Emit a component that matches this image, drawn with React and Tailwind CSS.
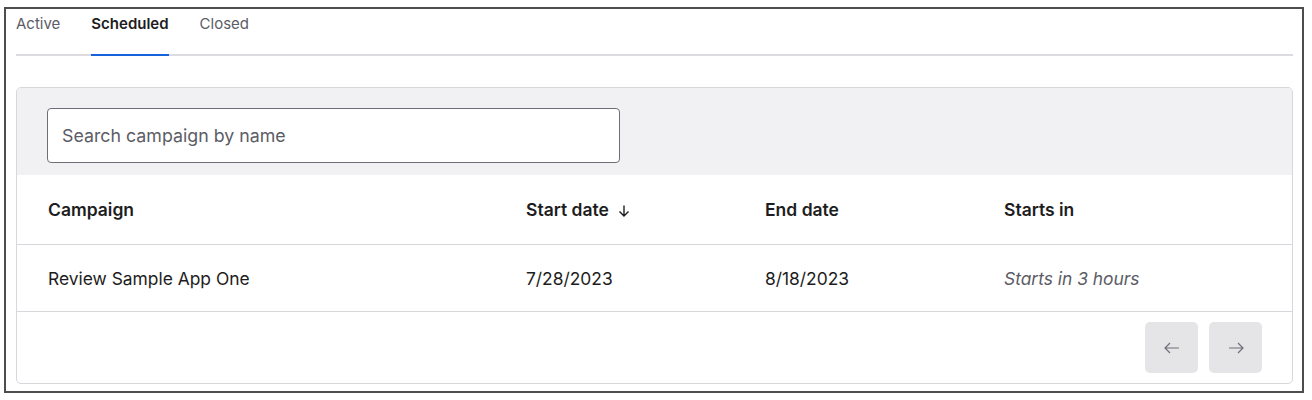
import React from "react";

const font = { fontFamily: "Inter, 'Noto Sans', sans-serif" };

function ArrowLeft() {
  return (
    <svg width="20" height="20" viewBox="0 0 20 20" fill="none" stroke="#6e6e78" strokeWidth="1.2">
      <path d="M17 10H3M8 5l-5 5 5 5" />
    </svg>
  );
}
function ArrowRight() {
  return (
    <svg width="20" height="20" viewBox="0 0 20 20" fill="none" stroke="#6e6e78" strokeWidth="1.2">
      <path d="M3 10h14M12 5l5 5-5 5" />
    </svg>
  );
}

export default function App() {
  return (
    <div className="w-[1312px] h-[400px] bg-white pt-[7px] pl-[4px]" style={font}>
      <div className="w-[1300px] h-[386px] border-2 border-[#4d4d4d] pl-[10px] pr-[9px]">
        <div className="flex gap-[31px] border-b-2 border-[#dcdce0] text-[15px] h-[47px]">
          <div className="pt-[4px] text-[#5c5c66]">Active</div>
          <div className="pt-[4px] font-semibold text-[#1d1d21] border-b-2 border-[#1662dd] -mb-[2px]">Scheduled</div>
          <div className="pt-[4px] text-[#5c5c66]">Closed</div>
        </div>
        <div className="mt-[31px] h-[297px] border border-[#d7d7dc] rounded-[5px] overflow-hidden flex flex-col">
          <div className="h-[87px] bg-[#f1f1f3] pl-[30px] pt-[20px]">
            <div className="w-[573px] h-[55px] bg-white border border-[#6e6e78] rounded-[4px] flex items-center pl-[14px] pt-[2px] text-[17.8px] text-[#5c5c66]">
              Search campaign by name
            </div>
          </div>
          <div className="grid grid-cols-[478px_239px_239px_1fr] pl-[31px] h-[70px] items-center border-b border-[#d7d7dc] text-[17.5px] font-semibold text-[#1d1d21]">
            <div className="pt-[2px]">Campaign</div>
            <div className="pt-[2px] flex items-center gap-[8px]">
              Start date
              <svg width="14" height="14" viewBox="0 0 14 14" fill="none" stroke="#1d1d21" strokeWidth="1.4">
                <path d="M7 1.5v10.5M2.5 7.5l4.5 4.5 4.5-4.5" />
              </svg>
            </div>
            <div className="pt-[2px]">End date</div>
            <div className="pt-[2px]">Starts in</div>
          </div>
          <div className="grid grid-cols-[478px_239px_239px_1fr] pl-[31px] h-[67px] items-center border-b border-[#d7d7dc] text-[17.4px] text-[#1d1d21]">
            <div className="pt-[2px]">Review Sample App One</div>
            <div className="pt-[2px]">7/28/2023</div>
            <div className="pt-[2px]">8/18/2023</div>
            <div className="pt-[2px] italic text-[#5c5c66]">Starts in 3 hours</div>
          </div>
          <div className="flex-1 flex justify-end items-start pt-[10px] pr-[30px] gap-[11px]">
            <div className="w-[53px] h-[51px] rounded-[5px] bg-[#e5e5e8] flex items-center justify-center">
              <ArrowLeft />
            </div>
            <div className="w-[53px] h-[51px] rounded-[5px] bg-[#e5e5e8] flex items-center justify-center">
              <ArrowRight />
            </div>
          </div>
        </div>
      </div>
    </div>
  );
}
